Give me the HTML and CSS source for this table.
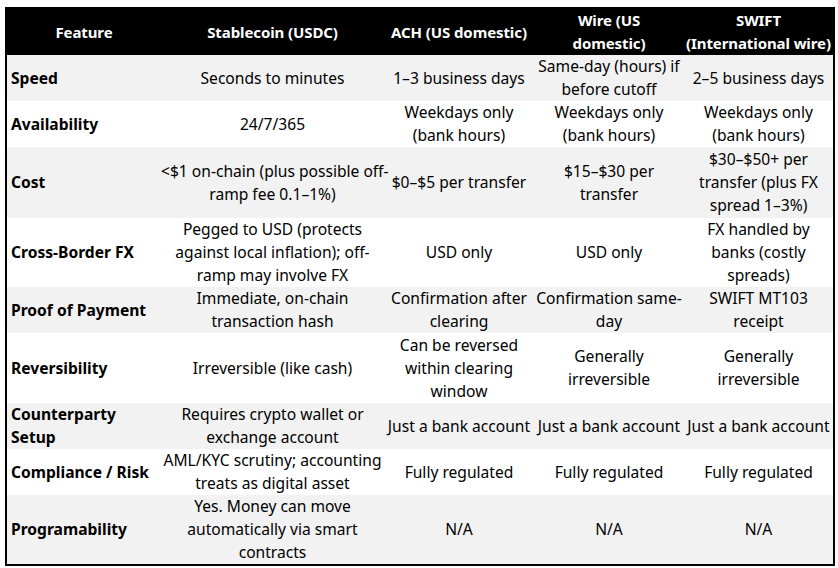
FILE: index.html
```html
<!DOCTYPE html>
<html>
<head>
<meta charset="utf-8">
<link rel="stylesheet" href="styles.css">
</head>
<body>
<div class="frame">
<table class="cmp">
  <colgroup>
    <col class="c-feat"><col class="c-stable"><col class="c-other"><col class="c-other"><col class="c-other">
  </colgroup>
  <thead>
    <tr class="h-head">
      <th>Feature</th>
      <th>Stablecoin (USDC)</th>
      <th>ACH (US domestic)</th>
      <th>Wire (US<br>domestic)</th>
      <th>SWIFT<br>(International wire)</th>
    </tr>
  </thead>
  <tbody>
    <tr class="alt h45">
      <td>Speed</td>
      <td>Seconds to minutes</td>
      <td>1–3 business days</td>
      <td>Same-day (hours) if<br>before cutoff</td>
      <td>2–5 business days</td>
    </tr>
    <tr class="h46">
      <td>Availability</td>
      <td>24/7/365</td>
      <td>Weekdays only<br>(bank hours)</td>
      <td>Weekdays only<br>(bank hours)</td>
      <td>Weekdays only<br>(bank hours)</td>
    </tr>
    <tr class="alt h71">
      <td>Cost</td>
      <td>&lt;$1 on-chain (plus possible off-<br>ramp fee 0.1–1%)</td>
      <td>$0–$5 per transfer</td>
      <td>$15–$30 per<br>transfer</td>
      <td>$30–$50+ per<br>transfer (plus FX<br>spread 1–3%)</td>
    </tr>
    <tr class="h69">
      <td>Cross-Border FX</td>
      <td>Pegged to USD (protects<br>against local inflation); off-<br>ramp may involve FX</td>
      <td>USD only</td>
      <td>USD only</td>
      <td>FX handled by<br>banks (costly<br>spreads)</td>
    </tr>
    <tr class="alt h46">
      <td>Proof of Payment</td>
      <td>Immediate, on-chain<br>transaction hash</td>
      <td>Confirmation after<br>clearing</td>
      <td>Confirmation same-<br>day</td>
      <td>SWIFT MT103<br>receipt</td>
    </tr>
    <tr class="h70">
      <td>Reversibility</td>
      <td>Irreversible (like cash)</td>
      <td>Can be reversed<br>within clearing<br>window</td>
      <td>Generally<br>irreversible</td>
      <td>Generally<br>irreversible</td>
    </tr>
    <tr class="alt h46">
      <td>Counterparty<br>Setup</td>
      <td>Requires crypto wallet or<br>exchange account</td>
      <td>Just a bank account</td>
      <td>Just a bank account</td>
      <td>Just a bank account</td>
    </tr>
    <tr class="h45">
      <td>Compliance / Risk</td>
      <td>AML/KYC scrutiny; accounting<br>treats as digital asset</td>
      <td>Fully regulated</td>
      <td>Fully regulated</td>
      <td>Fully regulated</td>
    </tr>
    <tr class="alt h70">
      <td>Programability</td>
      <td>Yes. Money can move<br>automatically via smart<br>contracts</td>
      <td>N/A</td>
      <td>N/A</td>
      <td>N/A</td>
    </tr>
  </tbody>
</table>
</div>
</body>
</html>
```

FILE: styles.css
```css
html, body {
  margin: 0;
  padding: 0;
  background: #ffffff;
}

.frame {
  padding: 7px 0 0 5px;
}

.cmp {
  border-collapse: collapse;
  table-layout: fixed;
  width: 830px;
  border: 2px solid #000;
  font-family: "Noto Sans", "Open Sans", sans-serif;
  font-size: 15.6px;
  line-height: 23px;
  color: #000;
}

.c-feat { width: 155px; }
.c-stable { width: 223px; }
.c-other { width: 150px; }

.cmp th, .cmp td {
  padding: 0;
  text-align: center;
  vertical-align: middle;
  white-space: nowrap;
}

.cmp thead th {
  background: #000;
  color: #fff;
  font-weight: 700;
  font-size: 15px;
  letter-spacing: -0.1px;
}

.cmp td:first-child {
  text-align: left;
  font-weight: 700;
  padding-left: 4px;
}

.cmp tr.alt td {
  background: #f2f2f2;
}

.h-head { height: 47px; }
.h45 { height: 45px; }
.h46 { height: 46px; }
.h69 { height: 69px; }
.h70 { height: 70px; }
.h71 { height: 71px; }
```
